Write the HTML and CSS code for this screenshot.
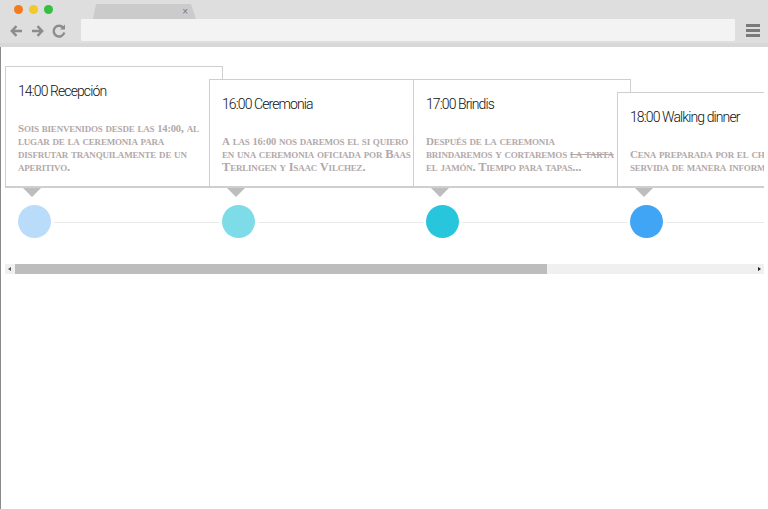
FILE: index.html
```html
<!DOCTYPE html>
<html lang="es">
<head>
<meta charset="utf-8">
<title>Timeline</title>
<link rel="stylesheet" href="styles.css">
</head>
<body>
<header class="browser">
  <div class="tabstrip">
    <span class="dot dot-red"></span>
    <span class="dot dot-yellow"></span>
    <span class="dot dot-green"></span>
    <div class="tab"><span class="tab-close">×</span></div>
  </div>
  <div class="toolbar">
    <svg class="nav" width="60" height="16" viewBox="0 0 60 16" fill="none" stroke="#8c8c8c" stroke-width="2.4">
      <path d="M12 8H2M6.5 3.2 1.8 8l4.7 4.8"/>
      <path d="M22 8h10M27.500 3.200 32.200 8l-4.700 4.800"/>
      <path d="M53.500 5a5.400 5.400 0 1 0 .8 4.500"/>
      <path d="M55 1.500V6.500H50" fill="#8c8c8c" stroke="none"/>
    </svg>
    <div class="address"></div>
    <div class="menu"><span></span><span></span><span></span></div>
  </div>
</header>
<main class="page">
  <div class="timeline">
    <article class="event event-1">
      <div class="card">
        <h2>14:00 Recepción</h2>
        <p>Sois bienvenidos desde las <span class="num">14:00</span>, al lugar de la ceremonia para disfrutar tranquilamente de un aperitivo.</p>
      </div>
      <div class="arrow"></div>
      <div class="track"><span class="circle c1"></span></div>
    </article>
    <article class="event event-2">
      <div class="card">
        <h2>16:00 Ceremonia</h2>
        <p>A las <span class="num">16:00</span> nos daremos el si quiero en una ceremonia oficiada por Baas Terlingen y Isaac Vilchez.</p>
      </div>
      <div class="arrow"></div>
      <div class="track"><span class="circle c2"></span></div>
    </article>
    <article class="event event-3">
      <div class="card">
        <h2>17:00 Brindis</h2>
        <p>Después de la ceremonia brindaremos y cortaremos <s>la tarta</s> el jamón. Tiempo para tapas...</p>
      </div>
      <div class="arrow"></div>
      <div class="track"><span class="circle c3"></span></div>
    </article>
    <article class="event event-4">
      <div class="card">
        <h2>18:00 Walking dinner</h2>
        <p>Cena preparada por el chef y<br>servida de manera informal.</p>
      </div>
      <div class="arrow"></div>
      <div class="track"><span class="circle c4"></span></div>
    </article>
  </div>
  <div class="scrollbar">
    <span class="sb-btn sb-left"></span>
    <span class="sb-thumb"></span>
    <span class="sb-rest"></span>
    <span class="sb-btn sb-right"></span>
  </div>
</main>
</body>
</html>
```
FILE: styles.css
```css
* { box-sizing: border-box; }
html, body { margin: 0; height: 100%; }
body { background: #fff; overflow: hidden; display: flex; flex-direction: column; }

.browser { height: 47px; flex: none; background: #dedede; border-bottom: 4px solid #d8d8d8; }
.tabstrip { height: 19px; display: flex; align-items: flex-start; padding: 5px 0 0 14px; gap: 6px; }
.dot { width: 9px; height: 9px; border-radius: 50%; }
.dot-red { background: #f47a1c; }
.dot-yellow { background: #f0c92a; }
.dot-green { background: #33c03e; }
.tab { width: 103px; height: 15px; margin: -1px 0 0 34px; background: #cbcbcb; clip-path: polygon(3px 0, 98px 0, 103px 100%, 0 100%); display: flex; justify-content: flex-end; align-items: center; padding-right: 8px; }
.tab-close { font: 10px/1 "Liberation Sans", sans-serif; color: #777; }
.toolbar { height: 24px; display: flex; align-items: flex-start; }
.nav { flex: none; margin: 4px 0 0 10px; }
.address { width: 654px; height: 22px; margin-left: 11px; background: #f3f3f3; border-radius: 1px; }
.menu { display: flex; flex-direction: column; gap: 2px; margin: 5px 0 0 11px; }
.menu span { width: 14px; height: 3px; background: #7a7a7a; }

.page { flex: 1; border-left: 1px solid #8a8a8a; padding: 19px 4px 0 4px; }
.timeline { display: flex; align-items: flex-end; overflow: hidden; height: 185px; }
.event { flex: none; width: 204px; display: flex; flex-direction: column; height: 100%; justify-content: flex-end; position: relative; }
.event-1 { z-index: 1; }
.event-2 { z-index: 2; }
.event-3 { z-index: 3; }
.event-4 { z-index: 4; }

.card { width: 218px; background: #fff; border: 1px solid #cfcfcf; border-bottom: 2px solid #cfcfcf; padding: 0 12px 12px 12px; }
.card h2 { margin: 0 0 21px; padding-top: 14px; font: 300 14px/20px "Roboto", sans-serif; color: #111; letter-spacing: -.9px; }
.card p { margin: 0; font: 700 12.500px/13px "Liberation Serif", serif; font-variant: small-caps; letter-spacing: -.2px; color: #b3a9a9; }
.card p::first-letter { font-size: 11px; }
.card s { text-decoration-thickness: 1px; }
.card .num { font-size: 10.500px; }

.arrow { width: 0; height: 0; margin-left: 18px; border-left: 9px solid transparent; border-right: 9px solid transparent; border-top: 9px solid #bdbdbd; }
.track { height: 33px; margin: 8px 0 13px; display: flex; align-items: center; background: linear-gradient(#e9e9e9, #e9e9e9) 0 17px / 100% 1px no-repeat; padding-left: 13px; }
.event-1 .track { background-position: 30px 17px; }
.circle { width: 33px; height: 33px; border-radius: 50%; box-shadow: 0 0 0 3px #fff; }
.c1 { background: #b9dcfb; }
.c2 { background: #7edce8; }
.c3 { background: #27c6dc; }
.c4 { background: #41a5f5; }

.scrollbar { display: flex; height: 10px; margin-top: 13px; background: #f0f0f0; }
.sb-btn { width: 10px; flex: none; position: relative; }
.sb-btn::after { content: ""; position: absolute; top: 3px; border-top: 2px solid transparent; border-bottom: 2px solid transparent; }
.sb-left::after { left: 3px; border-right: 3px solid #555; }
.sb-right::after { right: 3px; border-left: 3px solid #222; }
.sb-thumb { width: 532px; flex: none; background: #bdbdbd; }
.sb-rest { flex: 1; }
```
